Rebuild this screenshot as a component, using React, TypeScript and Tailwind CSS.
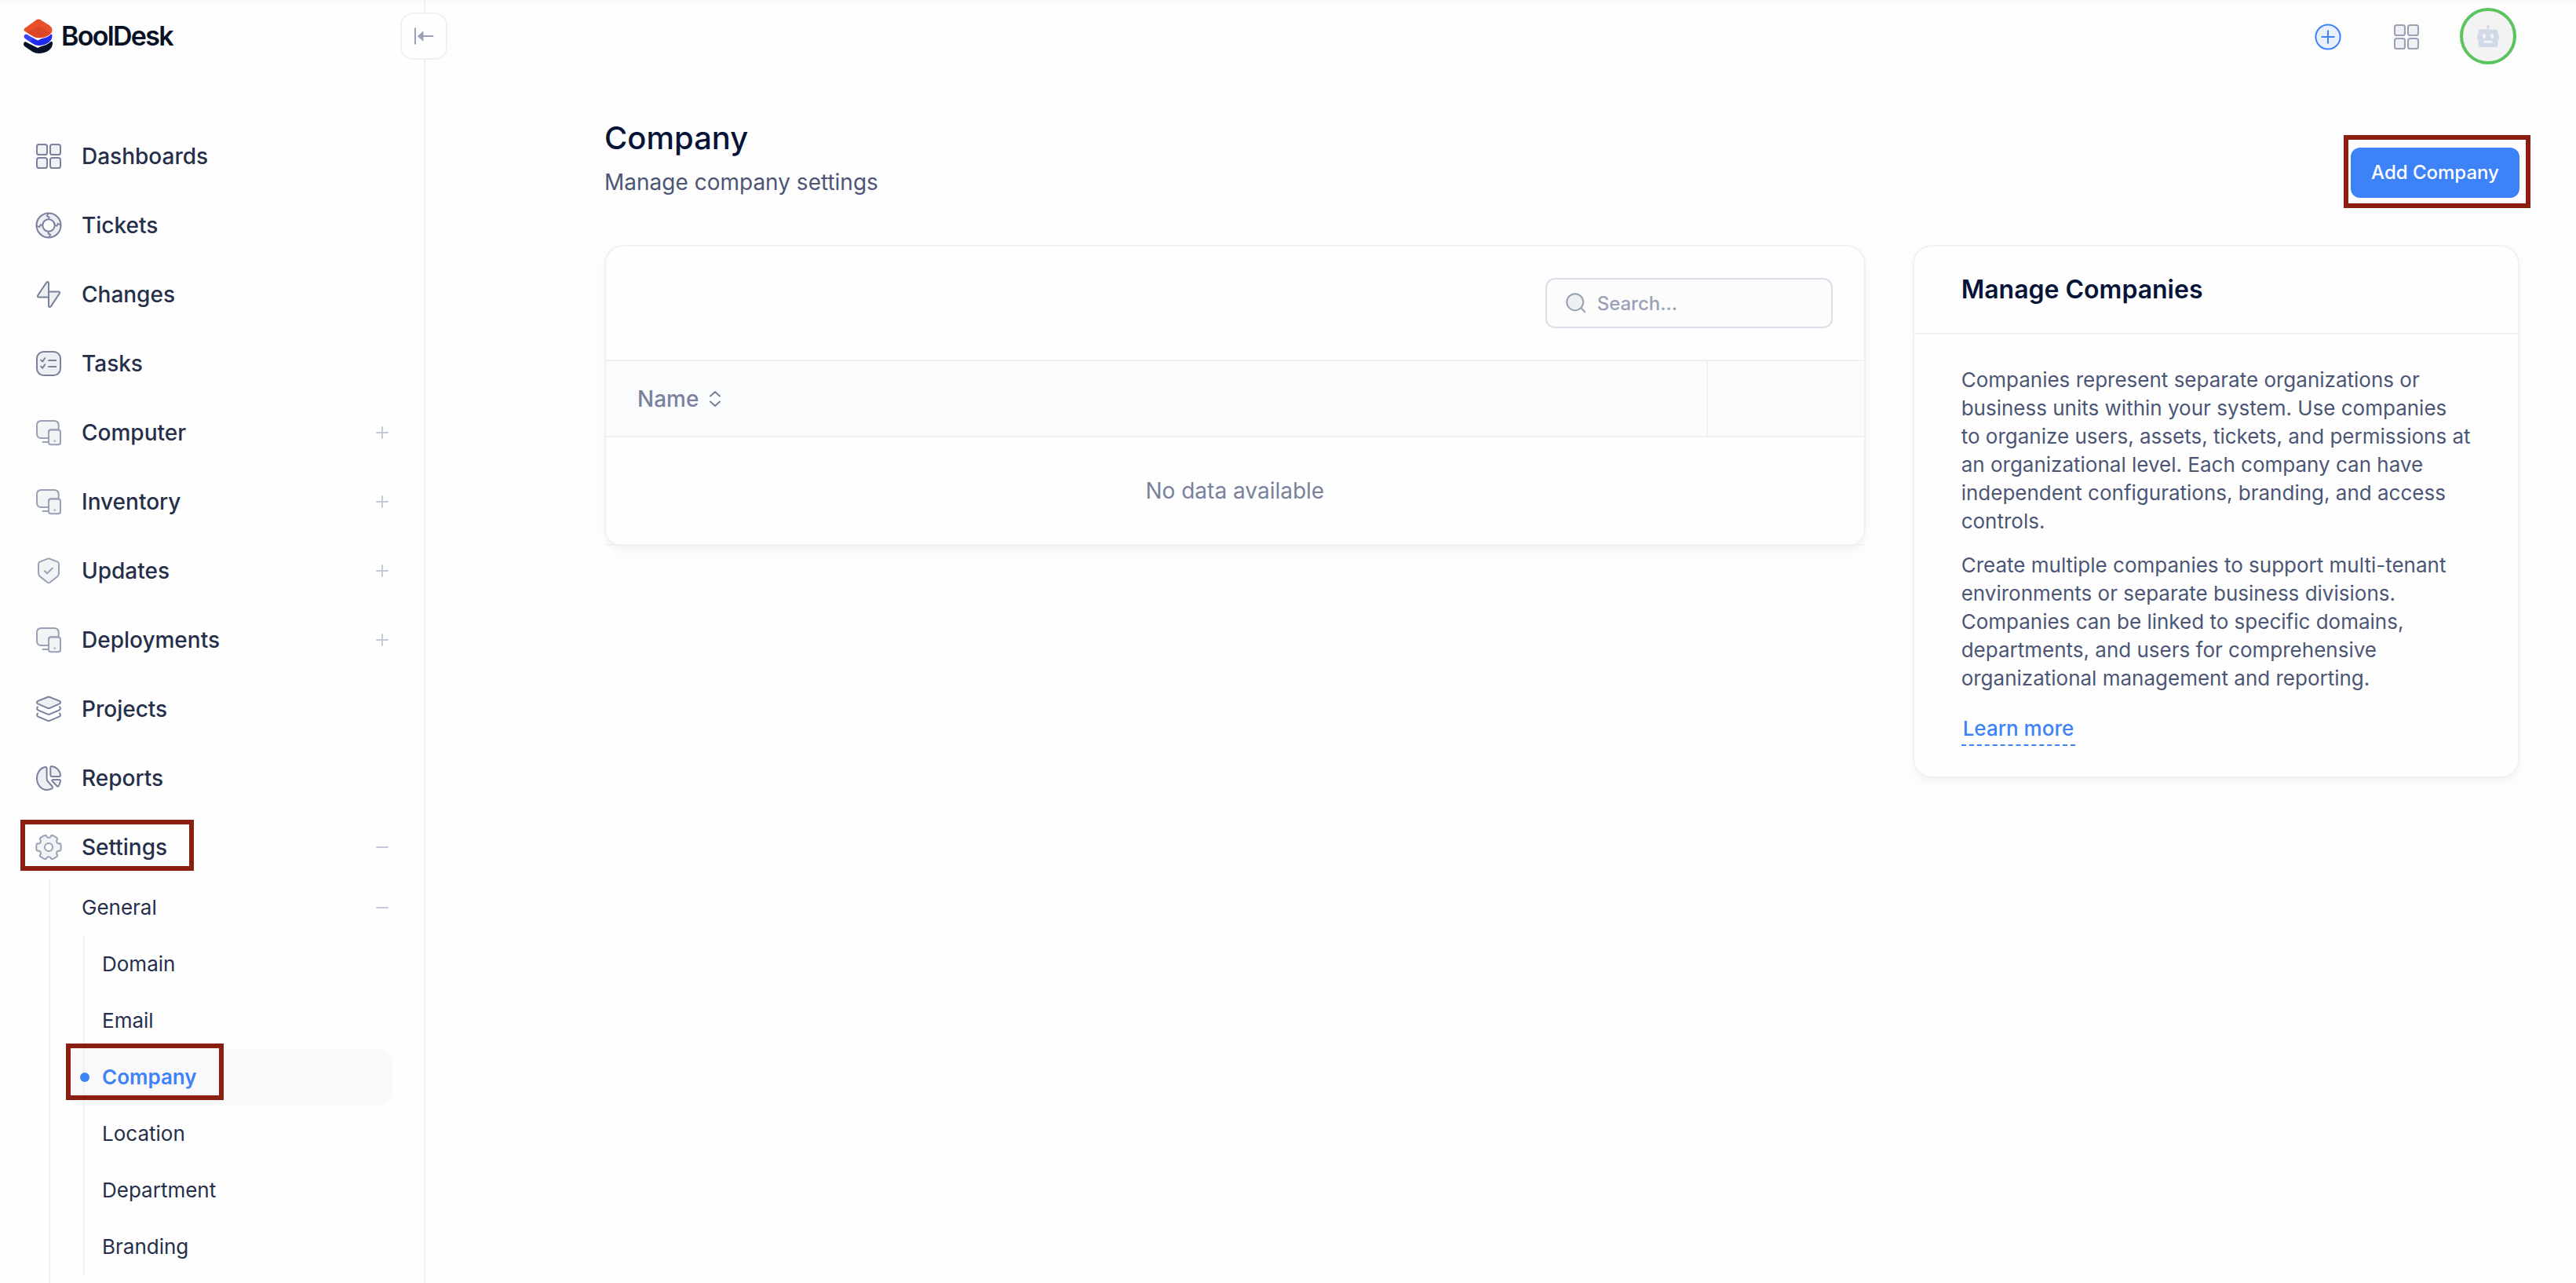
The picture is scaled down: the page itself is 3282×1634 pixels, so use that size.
import type { ReactNode } from "react";

const FILL = "#78829d";

function Svg({ children, soft }: { children: ReactNode; soft?: boolean }) {
  return (
    <svg
      viewBox="0 0 34 34"
      className={soft ? "size-[34px] shrink-0 text-[#99a1b7]" : "size-[34px] shrink-0 text-[#78829d]"}
      fill="none"
      stroke="currentColor"
      strokeWidth="2"
      strokeLinecap="round"
      strokeLinejoin="round"
    >
      {children}
    </svg>
  );
}

function GridIcon({ soft }: { soft?: boolean }) {
  return (
    <Svg soft={soft}>
      {[2, 19].map((x) =>
        [2, 19].map((y) => (
          <rect key={`${x}-${y}`} x={x} y={y} width="13" height="13" rx="2.6" fill={FILL} fillOpacity="0.1" />
        )),
      )}
    </Svg>
  );
}

function TicketIcon() {
  return (
    <Svg>
      <path
        d="M17 1.5a15.5 15.5 0 1 1 0 31a15.5 15.5 0 1 1 0-31zM17 9.3a7.7 7.7 0 1 0 0 15.4a7.7 7.7 0 1 0 0-15.4z"
        fill={FILL}
        fillOpacity="0.12"
        fillRule="evenodd"
      />
      {[0, 90, 180, 270].map((a) => (
        <path key={a} d="M16.6 2L14.6 5.2L17.8 6.6L16.8 9" transform={`rotate(${a} 17 17)`} strokeWidth="1.7" />
      ))}
    </Svg>
  );
}

function BoltIcon() {
  return (
    <Svg>
      <path
        d="M17 20.5H4.4C3 20.5 2.5 19.4 3.2 18.3L14.1 1.9C15.2.4 17 1 17 2.6zM17 13.5H29.6C31 13.5 31.5 14.6 30.8 15.7L19.9 32.1C18.8 33.6 17 33 17 31.4z"
        fill={FILL}
        fillOpacity="0.12"
      />
    </Svg>
  );
}

function TaskIcon() {
  return (
    <Svg>
      <rect x="2" y="2" width="30" height="30" rx="8.5" fill={FILL} fillOpacity="0.12" />
      <path d="M7.2 12.6L9.2 14.5L12.2 10M7.2 20.8L9.2 22.7L12.2 18.2M17 13H26.2M17 21H26.2" />
    </Svg>
  );
}

function DeviceIcon() {
  return (
    <Svg soft>
      <path d="M17 24H7.5Q2 24 2 18.5V7.5Q2 2 7.5 2H24.2Q29.7 2 29.7 7.5V13.3H20Q17 13.3 17 16.3z" fill={FILL} fillOpacity="0.09" />
      <rect x="17" y="13.5" width="15" height="18.7" rx="2.8" fill={FILL} fillOpacity="0.09" />
      <path d="M9.5 28.9H16.5" />
      <circle cx="24.6" cy="27.6" r="0.5" strokeWidth="1.4" />
    </Svg>
  );
}

function ShieldIcon() {
  return (
    <Svg soft>
      <path
        d="M15.7 1.6Q17 1 18.3 1.6L28 5.4Q30 6.3 30 8.4V20Q30 22.6 27.8 24.4L18.6 31.8Q17 33 15.4 31.8L6.2 24.4Q4 22.6 4 20V8.4Q4 6.3 6 5.4z"
        fill={FILL}
        fillOpacity="0.09"
      />
      <path d="M12 17.2L15 20.2L22 13.6" />
    </Svg>
  );
}

function LayersIcon() {
  return (
    <Svg>
      <path
        d="M15.9 1.8Q17 1.4 18.1 1.8L30.5 6.6Q33.6 8.6 30.8 10.4L18.2 15.8Q17 16.3 15.8 15.8L3.2 10.4Q.4 8.6 3.5 6.6z"
        fill={FILL}
        fillOpacity="0.12"
      />
      <path d="M3 14.2Q1 16.4 3.4 18.3L15.8 23.6Q17 24.1 18.2 23.6L30.6 18.3Q33 16.4 31 14.2" />
      <path d="M3 22.6Q1 24.8 3.4 26.7L15.8 31.8Q17 32.3 18.2 31.8L30.6 26.7Q33 24.8 31 22.6" />
    </Svg>
  );
}

function ReportIcon() {
  return (
    <Svg>
      <path
        d="M14.6 4.6V17.6Q14.6 19.6 15.7 21L21.4 27.2Q23.1 29.2 21 30.4Q18.4 32 14.6 32C7.6 32 2 25.3 2 17.2C2 9.8 6.3 4.3 12 3Q14.6 2.4 14.6 4.6z"
        fill={FILL}
        fillOpacity="0.12"
      />
      <path d="M19.3 3.6Q19.3 1.8 21.1 2C27 2.8 31.6 7.6 32 13.3Q32 15 30.4 15H21.8Q19.3 15 19.3 12.5z" fill={FILL} fillOpacity="0.12" />
      <path d="M22.5 18.9H30.6Q32.2 18.9 32 20.5C31.7 23 30.9 25.2 29.6 27Q28.6 28.2 27.4 27L21.6 20.7Q20.5 19.2 22.5 18.9z" fill={FILL} fillOpacity="0.12" />
    </Svg>
  );
}

/* Six-tooth outline with its corners rounded off. */
function gearPath() {
  const pts: [number, number][] = [];
  for (let i = 0; i < 6; i++) {
    for (const [offset, r] of [[-17, 16.4], [17, 16.4], [21, 12.3], [39, 12.3]]) {
      const t = ((i * 60 + offset) * Math.PI) / 180;
      pts.push([17 + r * Math.cos(t), 17 + r * Math.sin(t)]);
    }
  }
  const mix = (a: [number, number], b: [number, number], k: number) =>
    `${(a[0] + (b[0] - a[0]) * k).toFixed(2)} ${(a[1] + (b[1] - a[1]) * k).toFixed(2)}`;
  return (
    pts
      .map((p, i) => {
        const prev = pts[(i + pts.length - 1) % pts.length];
        const next = pts[(i + 1) % pts.length];
        return `${i ? "L" : "M"}${mix(p, prev, 0.4)}Q${p[0].toFixed(2)} ${p[1].toFixed(2)} ${mix(p, next, 0.4)}`;
      })
      .join("") + "z"
  );
}

function GearIcon() {
  return (
    <Svg soft>
      <path d={gearPath()} fill={FILL} fillOpacity="0.09" />
      <circle cx="17" cy="17" r="5" fill="#fefefe" />
    </Svg>
  );
}

function Toggle({ open }: { open?: boolean }) {
  return (
    <svg viewBox="0 0 18 18" className="ml-auto size-[18px] text-[#c4cada]" stroke="currentColor" strokeWidth="2" strokeLinecap="round">
      <path d={open ? "M2 9H16" : "M2 9H16M9 2V16"} />
    </svg>
  );
}

const NAV: { label: string; icon: ReactNode; more?: boolean; open?: boolean }[] = [
  { label: "Dashboards", icon: <GridIcon /> },
  { label: "Tickets", icon: <TicketIcon /> },
  { label: "Changes", icon: <BoltIcon /> },
  { label: "Tasks", icon: <TaskIcon /> },
  { label: "Computer", icon: <DeviceIcon />, more: true },
  { label: "Inventory", icon: <DeviceIcon />, more: true },
  { label: "Updates", icon: <ShieldIcon />, more: true },
  { label: "Deployments", icon: <DeviceIcon />, more: true },
  { label: "Projects", icon: <LayersIcon /> },
  { label: "Reports", icon: <ReportIcon /> },
  { label: "Settings", icon: <GearIcon />, more: true, open: true },
];

const GENERAL = ["Domain", "Email", "Company", "Location", "Department", "Branding"];

function Logo() {
  return (
    <div className="flex h-[46px] items-center pl-[29px]">
      <svg viewBox="0 0 38 46" className="h-[46px] w-[38px]">
        <path d="M1 33.5Q.5 32 3 30L19 38L36 30Q38.2 29 38 32.5C38 39.5 30 45 20.5 45Q16 45 12.6 43L3 36.5Q1 35 1 33.5z" fill="#071226" />
        <path d="M1 23Q1 21.5 4 20L19 28L36 20Q38 19 38 22.5C38 30 30 35.5 20.5 35.5Q16 35.5 12.6 33L3 26.5Q1 25 1 23z" fill="#202bee" stroke="#fefefe" strokeWidth="1" />
        <path d="M2.2 23.2Q2 21.5 5 20.5L14 27L9 30L3 26z" fill="#3a45f5" />
        <path d="M17.6 1.6Q20 .2 22.5 1.6L33.6 8.6Q38 11.5 38 15C38 21.5 29.5 25.7 20.8 25.7Q16 25.7 12.5 23.3L2.5 17.3Q-.6 15 2.5 12.5z" fill="#e94f29" stroke="#fefefe" strokeWidth="1" />
        <path d="M9 15.5L17.5 11Q20 9.8 22.5 11L35 18.8C32.5 23 27 25.2 20.8 25.2Q16 25.2 12.8 22.9L7 19.4Q5 17.5 9 15.500z" fill="#dc4826" />
      </svg>
      <span className="ml-[11px] text-[34px] leading-[46px] font-semibold tracking-[-1.7px] text-[#071226]">BoolDesk</span>
    </div>
  );
}

function Sidebar() {
  return (
    <aside className="relative flex h-[1634px] w-[542px] shrink-0 flex-col overflow-visible border-r-2 border-[#f1f1f2] bg-[#fefefe] pt-[23px]">
      <Logo />
      <button className="absolute top-4 left-[510px] z-10 flex size-[60px] items-center justify-center rounded-2xl border-2 border-[#f1f1f2] bg-[#fefefe]">
        <svg viewBox="0 0 28 28" className="size-7 text-[#99a1b7]" fill="none" stroke="currentColor" strokeWidth="2" strokeLinecap="round">
          <path d="M3 4.3V23.7M13 14H25.5" />
          <path d="M6.5 14L13 8.3V19.7z" fill="currentColor" strokeWidth="1" strokeLinejoin="round" />
        </svg>
      </button>
      <nav className="mt-[86px] flex flex-col">
        {NAV.map((item) => (
          <div key={item.label} className="flex h-[88px] items-center pr-11 pl-[45px]">
            {item.icon}
            <span className="ml-[25px] text-[28px] leading-9 font-medium text-[#252f4a]">{item.label}</span>
            {item.more && <Toggle open={item.open} />}
          </div>
        ))}
      </nav>
      <div className="-mt-[3px] ml-[62px] h-[514px] border-l-2 border-[#f1f1f4]">
        <div className="flex h-[72px] items-center pr-11 pl-10">
          <span className="text-[26px] leading-8 text-[#252f4a]">General</span>
          <Toggle open />
        </div>
        <div className="relative">
          <span className="absolute top-0 left-[42px] z-0 h-[432px] w-0.5 bg-[#f1f1f4]" />
          {GENERAL.map((label) =>
            label === "Company" ? (
              <div key={label} className="mr-10 ml-6 flex h-[72px] items-center rounded-2xl bg-[#f9f9f9] pl-3.5">
                <span className="z-10 size-3 rounded-full bg-[#3e82f7]" />
                <span className="ml-4 text-[26px] leading-8 font-semibold text-[#3e82f7]">{label}</span>
              </div>
            ) : (
              <div key={label} className="flex h-[72px] items-center pl-[66px] text-[26px] leading-8 text-[#252f4a]">
                {label}
              </div>
            ),
          )}
        </div>
      </div>
      <div className="pointer-events-none absolute top-[1044px] left-[26px] z-20 h-[65px] w-[221px] border-[6px] border-[#8a1f11]" />
      <div className="pointer-events-none absolute top-[1329px] left-[84px] z-20 h-[72px] w-[201px] border-[6px] border-[#8a1f11]" />
    </aside>
  );
}

function TopBar() {
  return (
    <header className="flex h-[94px] items-start justify-end pr-[76px]">
      <svg viewBox="0 0 34 34" className="mt-[30px] size-[34px] text-[#3e82f7]" fill="none" stroke="currentColor" strokeWidth="2" strokeLinecap="round">
        <circle cx="17" cy="17" r="15.6" fill="#3e82f7" fillOpacity="0.1" />
        <path d="M9.3 17H24.7M17 9.3V24.7" />
      </svg>
      <div className="mt-[30px] ml-[66px]">
        <GridIcon soft />
      </div>
      <div className="mt-2.5 ml-[51px] flex size-[72px] items-center justify-center rounded-full border-4 border-[#5bc45f] bg-[#f3f3f3]">
        <svg viewBox="0 0 28 28" className="size-7" fill="#d0d9e8">
          <rect x="1.5" y="5.5" width="25" height="22.5" rx="3" />
          <rect x="0" y="12.5" width="28" height="6" rx="1.5" />
          <circle cx="14" cy="2" r="2" />
          <rect x="13.2" y="2" width="1.6" height="5" />
          <ellipse cx="9" cy="14" rx="2.1" ry="3" fill="#f3f3f3" />
          <ellipse cx="19" cy="14" rx="2.1" ry="3" fill="#f3f3f3" />
          <rect x="8.3" y="19.7" width="11.4" height="3" rx="0.8" fill="#f3f3f3" />
        </svg>
      </div>
    </header>
  );
}

function CompanyTable() {
  return (
    <section className="col-span-2 h-[385px] rounded-3xl border-2 border-[#f1f1f2] bg-[#fefefe] shadow-[0_6px_8px_rgba(0,0,0,0.03)]">
      <div className="flex h-36 items-center justify-end pr-10">
        <div className="flex h-16 w-[366px] items-center rounded-xl border-2 border-[#dbdfe9] bg-[#fcfcfc] pl-6">
          <svg viewBox="0 0 26 26" className="size-[26px] text-[#99a1b7]" fill="none" stroke="currentColor" strokeWidth="2" strokeLinecap="round">
            <circle cx="11.7" cy="11.7" r="10.5" fill="#78829d" fillOpacity="0.1" />
            <path d="M19.5 19.5L24.3 24.3" />
          </svg>
          <span className="ml-3.5 pt-0.5 text-2xl font-medium text-[#99a1b7]">Search...</span>
        </div>
      </div>
      <div className="flex h-[99px] border-y-2 border-[#f0f0f5] bg-[#fafbfd]">
        <div className="flex flex-1 items-center border-r-2 border-[#f0f0f5] pl-10">
          <span className="text-[28px] leading-9 font-medium text-[#78829d]">Name</span>
          <svg viewBox="0 0 16 24" className="ml-[13px] h-6 w-4 text-[#78829d]" fill="none" stroke="currentColor" strokeWidth="2" strokeLinecap="round" strokeLinejoin="round">
            <path d="M2 8.5L8 3L14 8.5M2 15.5L8 21L14 15.5" />
          </svg>
        </div>
        <div className="w-[199px]" />
      </div>
      <div className="flex h-[138px] items-center justify-center border-b-2 border-[#f0f0f5] text-[28px] text-[#78829d]">No data available</div>
    </section>
  );
}

function InfoCard() {
  return (
    <section className="h-[679px] rounded-3xl border-2 border-[#f1f1f2] bg-[#fefefe] shadow-[0_6px_8px_rgba(0,0,0,0.03)]">
      <h2 className="flex h-28 items-center border-b-2 border-[#f1f1f2] px-[60px] text-[32px] font-semibold text-[#071437]">Manage Companies</h2>
      <div className="px-[60px] pt-10 text-[26px] leading-9 text-[#4b5675]">
        <p>
          Companies represent separate organizations or
          <br />
          business units within your system. Use companies
          <br />
          to organize users, assets, tickets, and permissions at
          <br />
          an organizational level. Each company can have
          <br />
          independent configurations, branding, and access
          <br />
          controls.
        </p>
        <p className="mt-5">
          Create multiple companies to support multi-tenant
          <br />
          environments or separate business divisions.
          <br />
          Companies can be linked to specific domains,
          <br />
          departments, and users for comprehensive
          <br />
          organizational management and reporting.
        </p>
        <a className="mt-7 inline-block h-10 border-b-2 border-dashed border-[#3e82f7] px-0.5 font-medium text-[#3e82f7]">Learn more</a>
      </div>
    </section>
  );
}

export default function App() {
  return (
    <div className="relative flex h-[1634px] w-[3282px] overflow-hidden bg-[#fdfdfd] font-['Inter',sans-serif]">
      <Sidebar />
      <main className="flex flex-1 flex-col">
        <TopBar />
        <div className="flex items-end justify-between pt-[52px] pr-[72px] pb-[60px] pl-[228px]">
          <div>
            <h1 className="text-[40px] leading-[60px] font-medium text-[#071437]">Company</h1>
            <p className="mt-1.5 text-[28px] leading-10 text-[#4b5675]">Manage company settings</p>
          </div>
          <div className="relative">
            <button className="h-16 w-[215px] rounded-xl bg-[#3e82f7] text-2xl font-medium text-white">Add Company</button>
            <div className="pointer-events-none absolute -top-4 -left-[9px] h-[93px] w-[238px] border-[6px] border-[#8a1f11]" />
          </div>
        </div>
        <div className="grid grid-cols-3 items-start gap-[60px] pr-[72px] pl-[228px]">
          <CompanyTable />
          <InfoCard />
        </div>
      </main>
      <div className="pointer-events-none absolute inset-x-0 top-0 z-30 h-1.5 bg-gradient-to-b from-black/2 to-transparent" />
    </div>
  );
}
